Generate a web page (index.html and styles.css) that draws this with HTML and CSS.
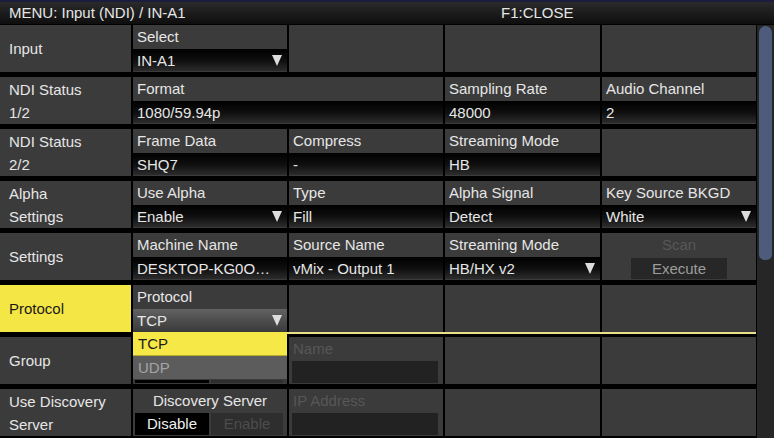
FILE: index.html
```html
<!DOCTYPE html>
<html lang="en">
<head>
    <meta charset="UTF-8">
    <title>MENU: Input (NDI) / IN-A1</title>
    <link rel="stylesheet" href="styles.css">
</head>
<body>

    <div class="titlebar">
        <span class="title">MENU: Input (NDI) / IN-A1</span>
        <span class="close">F1:CLOSE</span>
    </div>

    <div class="main">
        <div class="grid">

            <div class="row">
                <div class="cell label"><span>Input</span></div>
                <div class="cell field">
                    <div class="head">Select</div>
                    <div class="val">IN-A1<span class="arrow"></span></div>
                </div>
                <div class="cell"></div>
                <div class="cell"></div>
                <div class="cell"></div>
            </div>

            <div class="row">
                <div class="cell label"><span>NDI Status</span><span>1/2</span></div>
                <div class="cell field span2">
                    <div class="head">Format</div>
                    <div class="val">1080/59.94p</div>
                </div>
                <div class="cell field">
                    <div class="head">Sampling Rate</div>
                    <div class="val">48000</div>
                </div>
                <div class="cell field">
                    <div class="head">Audio Channel</div>
                    <div class="val">2</div>
                </div>
            </div>

            <div class="row">
                <div class="cell label"><span>NDI Status</span><span>2/2</span></div>
                <div class="cell field">
                    <div class="head">Frame Data</div>
                    <div class="val">SHQ7</div>
                </div>
                <div class="cell field">
                    <div class="head">Compress</div>
                    <div class="val">-</div>
                </div>
                <div class="cell field">
                    <div class="head">Streaming Mode</div>
                    <div class="val">HB</div>
                </div>
                <div class="cell"></div>
            </div>

            <div class="row">
                <div class="cell label"><span>Alpha</span><span>Settings</span></div>
                <div class="cell field">
                    <div class="head">Use Alpha</div>
                    <div class="val">Enable<span class="arrow"></span></div>
                </div>
                <div class="cell field">
                    <div class="head">Type</div>
                    <div class="val">Fill</div>
                </div>
                <div class="cell field">
                    <div class="head">Alpha Signal</div>
                    <div class="val">Detect</div>
                </div>
                <div class="cell field">
                    <div class="head">Key Source BKGD</div>
                    <div class="val">White<span class="arrow"></span></div>
                </div>
            </div>

            <div class="row">
                <div class="cell label"><span>Settings</span></div>
                <div class="cell field">
                    <div class="head">Machine Name</div>
                    <div class="val">DESKTOP-KG0O…</div>
                </div>
                <div class="cell field">
                    <div class="head">Source Name</div>
                    <div class="val">vMix - Output 1</div>
                </div>
                <div class="cell field">
                    <div class="head">Streaming Mode</div>
                    <div class="val">HB/HX v2<span class="arrow"></span></div>
                </div>
                <div class="cell field">
                    <div class="head center dim">Scan</div>
                    <div class="execute">Execute</div>
                </div>
            </div>

            <div class="row active">
                <div class="cell label selected"><span>Protocol</span></div>
                <div class="cell field dropdown-host">
                    <div class="head">Protocol</div>
                    <div class="val open">TCP<span class="arrow"></span></div>
                    <div class="dropdown">
                        <div class="option current">TCP</div>
                        <div class="option">UDP</div>
                    </div>
                </div>
                <div class="cell"></div>
                <div class="cell"></div>
                <div class="cell"></div>
            </div>

            <div class="row">
                <div class="cell label"><span>Group</span></div>
                <div class="cell field">
                    <div class="head"></div>
                    <div class="toggle">
                        <div class="btn on"></div>
                        <div class="btn off"></div>
                    </div>
                </div>
                <div class="cell field">
                    <div class="head dim">Name</div>
                    <div class="val disabled"></div>
                </div>
                <div class="cell"></div>
                <div class="cell"></div>
            </div>

            <div class="row">
                <div class="cell label"><span>Use Discovery</span><span>Server</span></div>
                <div class="cell field">
                    <div class="head center">Discovery Server</div>
                    <div class="toggle">
                        <div class="btn on">Disable</div>
                        <div class="btn off">Enable</div>
                    </div>
                </div>
                <div class="cell field">
                    <div class="head dim">IP Address</div>
                    <div class="val disabled"></div>
                </div>
                <div class="cell"></div>
                <div class="cell"></div>
            </div>

        </div>

        <div class="scrollbar">
            <div class="thumb"></div>
        </div>
    </div>

</body>
</html>
```

FILE: styles.css
```css
body {
    margin: 0;
    background: #000;
    color: #e6e6e6;
    font-family: "Liberation Sans", Arial, sans-serif;
    font-size: 15px;
    width: 774px;
    height: 438px;
    overflow: hidden;
}
.titlebar {
    height: 22px;
    border-top: 2px solid #1c1c3c;
    background: linear-gradient(#2a2a2a, #0e0e0e);
    display: flex;
    align-items: center;
    line-height: 22px;
}
.title {
    width: 492px;
    padding-left: 9px;
}
.main {
    display: flex;
    margin-top: 1px;
}
.grid {
    width: 756px;
}
.row {
    position: relative;
    display: grid;
    grid-template-columns: 131px 154px 154px 155px 154px;
    column-gap: 2px;
    height: 47px;
    margin-bottom: 5px;
}
.cell {
    position: relative;
    background: #3b3b3b;
}
.span2 { grid-column: span 2; }
.label {
    display: flex;
    flex-direction: column;
    justify-content: center;
    padding-left: 9px;
    line-height: 23px;
}
.label.selected {
    background: #f4e644;
    color: #1a1a1a;
}
.field {
    display: flex;
    flex-direction: column;
}
.head {
    height: 24px;
    line-height: 24px;
    padding-left: 4px;
}
.center {
    text-align: center;
    padding-left: 0;
}
.dim { color: #575757; }
.val {
    display: flex;
    align-items: center;
    justify-content: space-between;
    height: 22px;
    padding: 0 4px;
    background: linear-gradient(#000, #101010 55%, #2c2c2c);
    white-space: nowrap;
    overflow: hidden;
}
.val.open {
    background: linear-gradient(#626262, #4a4a4a 60%, #3c3c3c);
}
.val.disabled {
    background: #222;
    margin: 0 5px 0 3px;
}
.arrow {
    width: 0;
    height: 0;
    border-left: 5px solid transparent;
    border-right: 5px solid transparent;
    border-top: 11px solid #dcdcdc;
    margin-right: 1px;
}
.execute {
    width: 96px;
    height: 21px;
    line-height: 21px;
    margin: 1px auto 0;
    background: #272727;
    color: #9c9c9c;
    text-align: center;
}
.toggle {
    display: flex;
    gap: 2px;
    margin-left: 2px;
}
.btn {
    height: 22px;
    line-height: 22px;
    text-align: center;
}
.btn.on {
    width: 74px;
    background: #000;
    color: #f0f0f0;
}
.btn.off {
    width: 72px;
    background: #2e2e2e;
    color: #4c4c4c;
}
.row.active::after {
    content: "";
    position: absolute;
    left: 133px;
    right: 0;
    bottom: -2px;
    height: 2px;
    background: linear-gradient(#d8c860, #fff6b8, #d8c860);
}
.dropdown {
    position: absolute;
    top: 47px;
    left: 0;
    width: 100%;
    z-index: 2;
}
.option {
    height: 24px;
    line-height: 24px;
    padding-left: 5px;
    background: #5c5c5c;
    color: #a4a4a4;
    border-bottom: 1px solid #3a3a3a;
    box-sizing: border-box;
}
.option.current {
    background: #f6e846;
    color: #1a1a1a;
    border-bottom-color: #b8ac30;
}
.scrollbar {
    width: 17px;
    margin-left: 1px;
    height: 413px;
    background: #262626;
}
.thumb {
    width: 13px;
    height: 234px;
    margin: 1px 0 0 2px;
    background: #4e5c7b;
    border-radius: 7px 7px 6px 6px;
}
```
